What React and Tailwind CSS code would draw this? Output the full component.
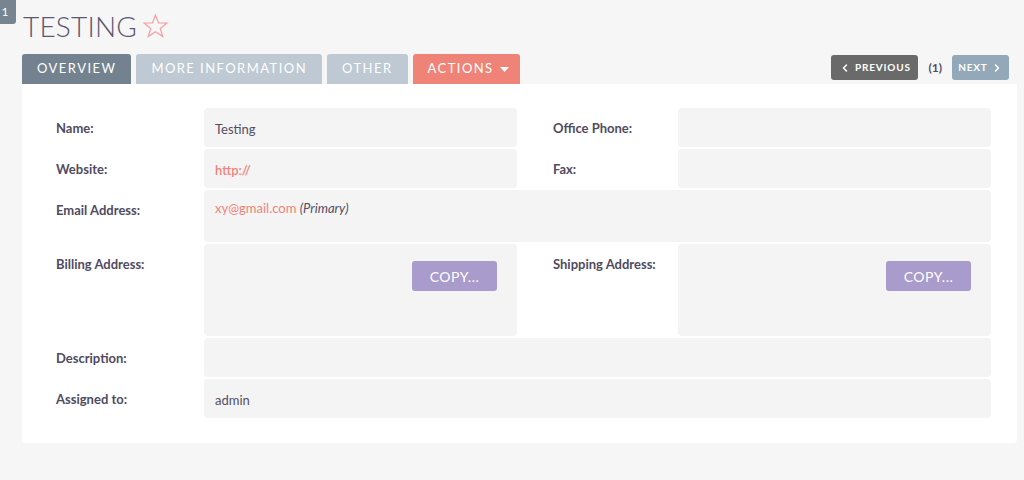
import { ChevronLeft, ChevronRight } from 'lucide-react'

const font = { fontFamily: 'Lato, "Open Sans", sans-serif' }

function Label({ children, wide }) {
  return (
    <div className={`${wide ? 'w-[161px] pl-[36px]' : 'w-[148px]'} shrink-0 pt-[10px] leading-[20px] text-[13px] font-bold text-[#4f4b5f]`}>
      {children}
    </div>
  )
}

function Box({ children, className = '' }) {
  return (
    <div className={`rounded-[4px] bg-[#f4f4f4] px-[11px] text-[13px] text-[#534d64] ${className}`}>
      {children}
    </div>
  )
}

function CopyButton() {
  return (
    <div className="flex justify-end pt-[17px]">
      <button className="w-[85px] h-[30px] rounded-[3px] bg-[#a99bcc] text-[14px] tracking-[0.5px] text-white">
        COPY...
      </button>
    </div>
  )
}

export default function App() {
  return (
    <div className="min-h-[480px] bg-[#f6f6f6] relative" style={font}>
      <div className="absolute left-0 top-0 w-[16px] h-[24px] bg-[#778591] rounded-br-[3px] text-white text-[12px] leading-[24px] text-center overflow-hidden">
        <span className="-ml-[6px]">1</span>
      </div>

      <div className="pl-[23px] pt-[9px] flex items-center gap-[5px]">
        <h1 className="text-[28px] font-light tracking-[0.2px] text-[#5b5770] leading-[34px]">TESTING</h1>
        <svg width="27" height="26" viewBox="0 0 24 24" fill="none" stroke="#f4a3a6" strokeWidth="1.2" strokeLinejoin="miter">
          <polygon points="12,2 14.8,9.2 22.5,9.4 16.4,14.2 18.6,21.6 12,17.3 5.4,21.6 7.6,14.2 1.5,9.4 9.2,9.2" />
        </svg>
      </div>

      <div className="mt-[11px] ml-[22px] mr-[7px] flex items-end justify-between">
        <div className="flex gap-[5px] text-[13px] tracking-[1.45px] text-white">
          <div className="h-[30px] px-[15px] flex items-center rounded-t-[3px] bg-[#748290]">OVERVIEW</div>
          <div className="h-[30px] px-[15px] flex items-center rounded-t-[3px] bg-[#bec9d3]">MORE INFORMATION</div>
          <div className="h-[30px] px-[15px] flex items-center rounded-t-[3px] bg-[#bec9d3]">OTHER</div>
          <div className="h-[30px] pl-[15px] pr-[11px] flex items-center gap-[6px] rounded-t-[3px] bg-[#f08377]">
            ACTIONS
            <svg width="9" height="5" viewBox="0 0 9 5"><polygon points="0,0 9,0 4.5,5" fill="white" /></svg>
          </div>
        </div>
        <div className="flex items-center gap-[10px] mb-[4px] mr-[8px]">
          <button className="h-[25px] w-[87px] flex items-center justify-center gap-[4px] rounded-[3px] bg-[#6a6a6a] text-white text-[10px] font-bold tracking-[0.8px]">
            <ChevronLeft size={12} strokeWidth={3} />PREVIOUS
          </button>
          <span className="text-[12px] font-bold text-[#534d64]">(1)</span>
          <button className="h-[25px] w-[57px] flex items-center justify-center gap-[3px] rounded-[3px] bg-[#93a8b8] text-white text-[10px] font-bold tracking-[0.8px]">
            NEXT<ChevronRight size={12} strokeWidth={3} />
          </button>
        </div>
      </div>

      <div className="ml-[22px] mr-[7px] bg-white rounded-b-[4px] pl-[34px] pr-[26px] pt-[24px] pb-[25px] flex flex-col gap-[2px]">
        <div className="flex h-[39px]">
          <Label>Name:</Label>
          <Box className="w-[313px] pt-[11px] leading-[20px]">Testing</Box>
          <Label wide>Office Phone:</Label>
          <Box className="w-[313px]" />
        </div>
        <div className="flex h-[39px]">
          <Label>Website:</Label>
          <Box className="w-[313px] pt-[11px] leading-[20px] text-[#f08377] font-semibold">http://</Box>
          <Label wide>Fax:</Label>
          <Box className="w-[313px]" />
        </div>
        <div className="flex h-[52px]">
          <Label>Email Address:</Label>
          <Box className="flex-1 pt-[8px] leading-[20px]">
            <span className="text-[#f08377]">xy@gmail.com</span> <i className="text-[13px] font-normal">(Primary)</i>
          </Box>
        </div>
        <div className="flex h-[92px]">
          <Label>Billing Address:</Label>
          <Box className="w-[313px] pr-[20px]"><CopyButton /></Box>
          <Label wide>Shipping Address:</Label>
          <Box className="w-[313px] pr-[20px]"><CopyButton /></Box>
        </div>
        <div className="flex h-[39px]">
          <Label>Description:</Label>
          <Box className="flex-1" />
        </div>
        <div className="flex h-[39px]">
          <Label>Assigned to:</Label>
          <Box className="flex-1 pt-[11px] leading-[20px]">admin</Box>
        </div>
      </div>
    </div>
  )
}
